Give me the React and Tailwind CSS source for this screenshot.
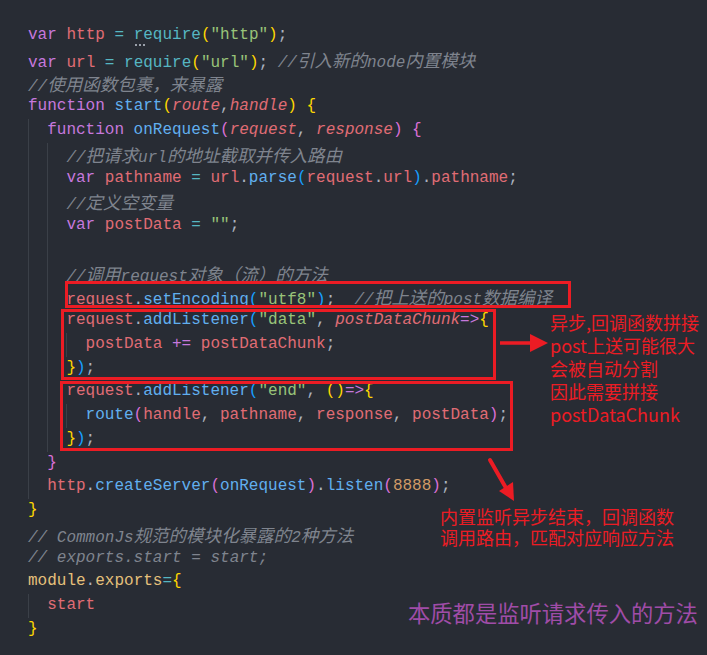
import React from 'react';

// token colours (One Dark style)
const K = 'text-[#c678dd]';
const V = 'text-[#e06c75]';
const F = 'text-[#61afef]';
const Cy = 'text-[#56b6c2]';
const S = 'text-[#98c379]';
const N = 'text-[#d19a66]';
const Y = 'text-[#e5c07b]';
const B1 = 'text-[#ffd700]';
const B2 = 'text-[#da70d6]';
const B3 = 'text-[#179fff]';
const P = 'text-[#e06c75] italic';

const cjk = /([\u3000-\u303f\u4e00-\u9fff\uff00-\uffef]+)/;

const T = ({ c, children }) => <span className={c}>{children}</span>;

const Cm = ({ children }) => (
  <span className="italic text-[#7f848e]">
    {children.split(cjk).map((part, i) =>
      i % 2 === 1 ? (
        <span key={i} className="font-['Noto_Sans_CJK_SC',sans-serif] text-[17.5px]">
          {part}
        </span>
      ) : (
        part
      )
    )}
  </span>
);

const Line = ({ children }) => (
  <div className="h-[23.76px] leading-[23.76px] whitespace-pre">{children}</div>
);

const Block = ({ children }) => (
  <div className="border-l border-[#3b4048] pl-[18.2px]">{children}</div>
);

const Box = ({ className }) => (
  <div className={'absolute border-[3px] border-[#ec1c24] ' + className} />
);

const App = () => {
  return (
    <div className="relative w-[707px] h-[655px] overflow-hidden bg-[#282c34] text-[#abb2bf] font-['Liberation_Mono','Noto_Sans_CJK_SC',monospace] text-[16px]">
      <div className="pt-[24px] pl-[28px]">
        <Line>
          <T c={K}>var</T> <T c={V}>http</T> <T c={Cy}>=</T>{' '}
          <span className="relative">
            <T c={Cy}>require</T>
            <span className="absolute left-[1px] top-[18px] flex gap-[2px]">
              <span className="w-[2px] h-[2px] bg-[#9aa0aa]" />
              <span className="w-[2px] h-[2px] bg-[#9aa0aa]" />
              <span className="w-[2px] h-[2px] bg-[#9aa0aa]" />
            </span>
          </span>
          <T c={B1}>(</T><T c={S}>"http"</T><T c={B1}>)</T>;
        </Line>
        <Line>
          <T c={K}>var</T> <T c={V}>url</T> <T c={Cy}>=</T> <T c={Cy}>require</T>
          <T c={B1}>(</T><T c={S}>"url"</T><T c={B1}>)</T>; <Cm>//引入新的node内置模块</Cm>
        </Line>
        <Line>
          <Cm>//使用函数包裹，来暴露</Cm>
        </Line>
        <Line>
          <T c={K}>function</T> <T c={F}>start</T><T c={B1}>(</T><T c={P}>route</T>,
          <T c={P}>handle</T><T c={B1}>)</T> <T c={B1}>{'{'}</T>
        </Line>
        <Block>
          <Line>
            <T c={K}>function</T> <T c={F}>onRequest</T><T c={B2}>(</T><T c={P}>request</T>,{' '}
            <T c={P}>response</T><T c={B2}>)</T> <T c={B2}>{'{'}</T>
          </Line>
          <Block>
            <Line>
              <Cm>//把请求url的地址截取并传入路由</Cm>
            </Line>
            <Line>
              <T c={K}>var</T> <T c={V}>pathname</T> <T c={Cy}>=</T> <T c={V}>url</T>.
              <T c={F}>parse</T><T c={B3}>(</T><T c={V}>request</T>.<T c={V}>url</T>
              <T c={B3}>)</T>.<T c={V}>pathname</T>;
            </Line>
            <Line>
              <Cm>//定义空变量</Cm>
            </Line>
            <Line>
              <T c={K}>var</T> <T c={V}>postData</T> <T c={Cy}>=</T> <T c={S}>""</T>;
            </Line>
            <Line> </Line>
            <Line>
              <Cm>//调用request对象（流）的方法</Cm>
            </Line>
            <Line>
              <T c={V}>request</T>.<T c={F}>setEncoding</T><T c={B3}>(</T><T c={S}>"utf8"</T>
              <T c={B3}>)</T>;{'  '}<Cm>//把上送的post数据编译</Cm>
            </Line>
            <Line>
              <T c={V}>request</T>.<T c={F}>addListener</T><T c={B3}>(</T><T c={S}>"data"</T>,{' '}
              <T c={P}>postDataChunk</T><T c={K}>=&gt;</T><T c={B1}>{'{'}</T>
            </Line>
            <Block>
              <Line>
                <T c={V}>postData</T> <T c={K}>+=</T> <T c={V}>postDataChunk</T>;
              </Line>
            </Block>
            <Line>
              <T c={B1}>{'}'}</T><T c={B3}>)</T>;
            </Line>
            <Line>
              <T c={V}>request</T>.<T c={F}>addListener</T><T c={B3}>(</T><T c={S}>"end"</T>,{' '}
              <T c={B1}>()</T><T c={K}>=&gt;</T><T c={B1}>{'{'}</T>
            </Line>
            <Block>
              <Line>
                <T c={F}>route</T><T c={B2}>(</T><T c={V}>handle</T>, <T c={V}>pathname</T>,{' '}
                <T c={V}>response</T>, <T c={V}>postData</T><T c={B2}>)</T>;
              </Line>
            </Block>
            <Line>
              <T c={B1}>{'}'}</T><T c={B3}>)</T>;
            </Line>
          </Block>
          <Line>
            <T c={B2}>{'}'}</T>
          </Line>
          <Line>
            <T c={V}>http</T>.<T c={F}>createServer</T><T c={B2}>(</T><T c={F}>onRequest</T>
            <T c={B2}>)</T>.<T c={F}>listen</T><T c={B2}>(</T><T c={N}>8888</T><T c={B2}>)</T>;
          </Line>
        </Block>
        <Line>
          <T c={B1}>{'}'}</T>
        </Line>
        <Line>
          <Cm>// CommonJs规范的模块化暴露的2种方法</Cm>
        </Line>
        <Line>
          <Cm>// exports.start = start;</Cm>
        </Line>
        <Line>
          <T c={Y}>module</T>.<T c={Y}>exports</T><T c={Cy}>=</T><T c={B1}>{'{'}</T>
        </Line>
        <Block>
          <Line>
            <T c={V}>start</T>
          </Line>
        </Block>
        <Line>
          <T c={B1}>{'}'}</T>
        </Line>
      </div>

      {/* 标注框 */}
      <Box className="left-[65px] top-[281px] w-[506px] h-[27px]" />
      <Box className="left-[61px] top-[309px] w-[435px] h-[71px]" />
      <Box className="left-[60px] top-[381px] w-[453px] h-[70px]" />

      {/* 箭头 */}
      <svg className="absolute left-[496px] top-[331px]" width="56" height="24" viewBox="0 0 56 24">
        <line x1="4" y1="12" x2="38" y2="12" stroke="#ec1c24" strokeWidth="3.5" />
        <polygon points="34,3 52,12 34,21" fill="#ec1c24" />
      </svg>
      <svg className="absolute left-[484px] top-[455px]" width="40" height="52" viewBox="0 0 40 52">
        <line x1="6" y1="5" x2="22" y2="33" stroke="#ec1c24" strokeWidth="4" strokeLinecap="round" />
        <polygon points="15,36 29,27 30,46" fill="#ec1c24" />
      </svg>

      <div className="absolute left-[550px] top-[311px] whitespace-nowrap font-['Noto_Sans_CJK_SC',sans-serif] text-[18px] leading-[23px] text-[#ec1c24]">
        <div>异步,回调函数拼接</div>
        <div>post上送可能很大</div>
        <div>会被自动分割</div>
        <div>因此需要拼接</div>
        <div>postDataChunk</div>
      </div>

      <div className="absolute left-[440px] top-[506px] whitespace-nowrap font-['Noto_Sans_CJK_SC',sans-serif] text-[18px] leading-[21px] text-[#ec1c24]">
        <div>内置监听异步结束，回调函数</div>
        <div>调用路由，匹配对应响应方法</div>
      </div>

      <div className="absolute left-[408px] top-[598px] whitespace-nowrap font-['Noto_Sans_CJK_SC',sans-serif] text-[22.3px] leading-[28px] text-[#a04ca8]">
        本质都是监听请求传入的方法
      </div>
    </div>
  );
};

export default App;
